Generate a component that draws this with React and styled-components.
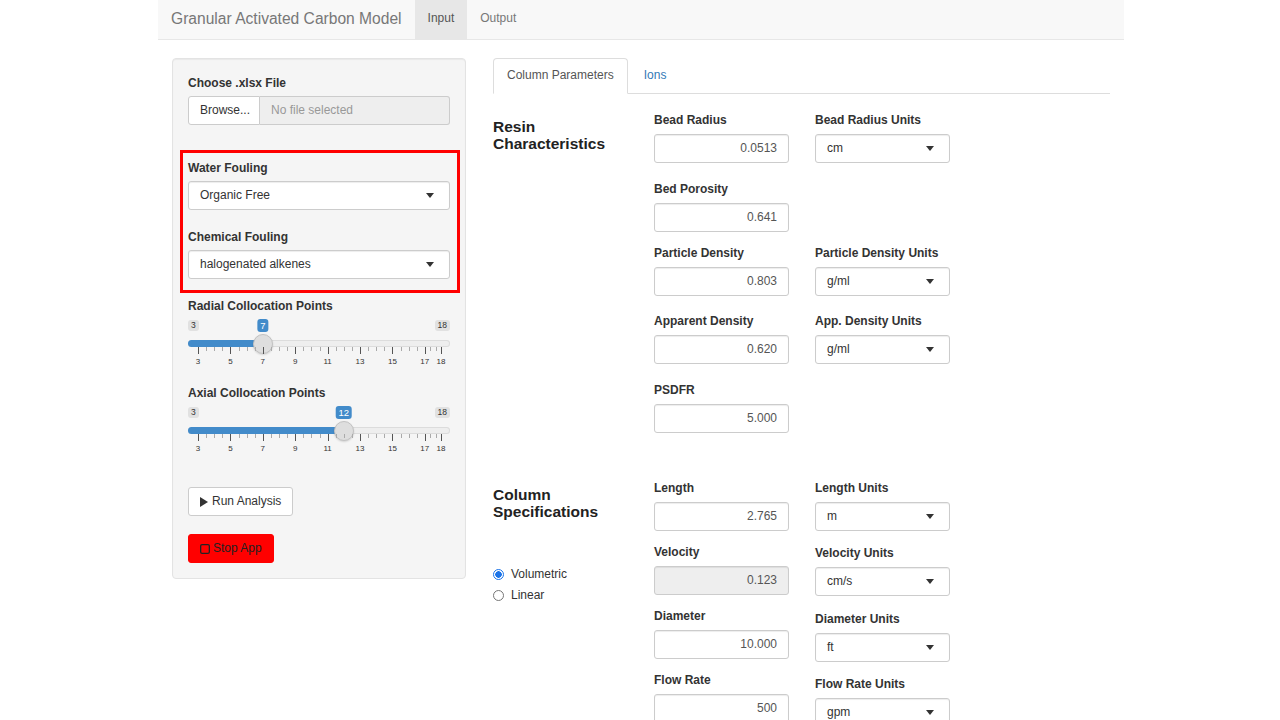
import React from 'react';
import styled, { createGlobalStyle } from 'styled-components';

const GlobalStyle = createGlobalStyle`
  html, body {
    margin: 0;
    padding: 0;
    background: #fff;
  }
  body {
    font-family: 'Liberation Sans', Arial, Helvetica, sans-serif;
    font-size: 12px;
    line-height: 17px;
    color: #333;
  }
  * {
    box-sizing: border-box;
  }
`;

const Page = styled.div`
  width: 966px;
  margin-left: 158px;
`;

const Navbar = styled.nav`
  display: flex;
  height: 40px;
  background: #f8f8f8;
  border-bottom: 1px solid #e7e7e7;
`;

const Brand = styled.div`
  display: flex;
  align-items: center;
  padding: 0 13px 2px;
  font-size: 15.6px;
  color: #777;
`;

const NavItem = styled.div`
  display: flex;
  align-items: center;
  padding: 0 13px 2px;
  color: ${p => (p.$active ? '#555' : '#777')};
  background: ${p => (p.$active ? '#e7e7e7' : 'transparent')};
`;

const Layout = styled.div`
  display: flex;
  align-items: flex-start;
  gap: 27px;
  padding: 18px 14px 0;
`;

const Well = styled.div`
  width: 294px;
  padding: 16px 15px 15px;
  background: #f5f5f5;
  border: 1px solid #e3e3e3;
  border-radius: 4px;
  box-shadow: inset 0 1px 1px rgba(0, 0, 0, 0.05);
`;

const Label = styled.div`
  font-weight: bold;
  line-height: 17px;
  margin-top: ${p => p.$mt ?? 0}px;
  margin-bottom: ${p => p.$mb ?? 5}px;
  color: #333;
`;

const Group = styled.div`
  margin-bottom: ${p => p.$mb}px;
`;

const FileRow = styled.div`
  display: flex;
  height: 29px;
`;

const BrowseButton = styled.div`
  width: 72px;
  padding-left: 11px;
  line-height: 27px;
  background: #fff;
  border: 1px solid #ccc;
  border-radius: 3px 0 0 3px;
  color: #333;
`;

const FileName = styled.div`
  flex: 1;
  padding-left: 11px;
  line-height: 27px;
  background: #eee;
  border: 1px solid #ccc;
  border-left: none;
  border-radius: 0 3px 3px 0;
  color: #999;
`;

const Annotation = styled.div`
  margin: 25px -10px 0 -8px;
  padding: 7px 7px 11px 5px;
  border: 3px solid #f00;
`;

const SelectBox = styled.div`
  display: flex;
  align-items: center;
  justify-content: space-between;
  height: 29px;
  padding: 0 15px 0 11px;
  background: #fff;
  border: 1px solid #ccc;
  border-radius: 3px;
  box-shadow: inset 0 1px 1px rgba(0, 0, 0, 0.075);
  color: #333;
`;

const Caret = styled.span`
  width: 0;
  height: 0;
  border-left: 4px solid transparent;
  border-right: 4px solid transparent;
  border-top: 5px solid #333;
`;

const NumberBox = styled.div`
  height: 29px;
  padding: 0 11px;
  line-height: 27px;
  text-align: right;
  color: #555;
  background: ${p => (p.$disabled ? '#eee' : '#fff')};
  border: 1px solid #ccc;
  border-radius: 3px;
  box-shadow: inset 0 1px 1px rgba(0, 0, 0, 0.075);
`;

const SliderWrap = styled.div`
  position: relative;
  padding-top: 5px;
  margin-bottom: 12px;
`;

const SliderEnds = styled.div`
  display: flex;
  justify-content: space-between;
  height: 11px;
`;

const EndTag = styled.span`
  padding: 0 3px;
  font-size: 8.5px;
  line-height: 11px;
  background: #e1e1e1;
  border-radius: 3px;
  color: #333;
`;

const ValueTag = styled.span`
  position: absolute;
  top: 4px;
  transform: translateX(-50%);
  padding: 0 3px;
  height: 13px;
  font-size: 9.5px;
  line-height: 13px;
  background: #428bca;
  color: #fff;
  border-radius: 3px;
`;

const Track = styled.div`
  position: relative;
  margin-top: 9px;
  height: 7px;
  background: #eee;
  border-radius: 4px;
  box-shadow: inset 0 0 0 1px #dcdcdc;
`;

const TrackFill = styled.div`
  height: 100%;
  background: #428bca;
  border-radius: 4px 0 0 4px;
`;

const Handle = styled.div`
  position: absolute;
  top: 50%;
  width: 20px;
  height: 20px;
  margin: -10px 0 0 -10px;
  background: #dedede;
  border: 1px solid #c2c2c2;
  border-radius: 50%;
  box-shadow: 0 1px 2px rgba(0, 0, 0, 0.15);
`;

const Grid = styled.div`
  position: relative;
  height: 26px;
`;

const Tick = styled.span`
  position: absolute;
  top: 0;
  width: 1px;
  height: ${p => (p.$major ? 7 : 4)}px;
  background: ${p => (p.$major ? '#555' : '#aaa')};
`;

const TickText = styled.span`
  position: absolute;
  top: 10px;
  transform: translateX(-50%);
  font-size: 8px;
  line-height: 10px;
  color: #333;
`;

const ButtonBlock = styled.div`
  display: flex;
  flex-direction: column;
  align-items: flex-start;
  gap: 18px;
  margin-top: 27px;
`;

const Button = styled.div`
  display: flex;
  align-items: center;
  gap: ${p => (p.$danger ? 3 : 4)}px;
  height: 29px;
  padding: 0 11px;
  background: ${p => (p.$danger ? '#f00' : '#fff')};
  border: 1px solid ${p => (p.$danger ? '#f00' : '#ccc')};
  border-radius: 3px;
  color: ${p => (p.$danger ? '#222' : '#333')};
`;

const Main = styled.div`
  width: 617px;
`;

const TabBar = styled.div`
  display: flex;
  border-bottom: 1px solid #ddd;
`;

const Tab = styled.div`
  margin: 0 2px -1px 0;
  padding: 8px 13px 9px;
  line-height: 17px;
  border: 1px solid ${p => (p.$active ? '#ddd' : 'transparent')};
  border-bottom-color: ${p => (p.$active ? '#fff' : 'transparent')};
  border-radius: 4px 4px 0 0;
  background: ${p => (p.$active ? '#fff' : 'transparent')};
  color: ${p => (p.$active ? '#555' : '#337ab7')};
`;

const Section = styled.div`
  display: grid;
  grid-template-columns: 135px 296px;
  column-gap: 26px;
  align-items: start;
  margin-top: ${p => p.$top}px;
`;

const Heading = styled.h4`
  margin: 6px 0 0;
  font-size: 15.5px;
  line-height: 17px;
  font-weight: bold;
  color: #222;
`;

const FieldRow = styled.div`
  display: grid;
  grid-template-columns: 135px 135px;
  column-gap: 26px;
  align-items: start;
`;

const Stack = styled.div`
  display: flex;
  flex-direction: column;
`;

const RadioList = styled.div`
  display: flex;
  flex-direction: column;
  gap: 4px;
  margin-top: 46px;
`;

const RadioItem = styled.div`
  display: flex;
  align-items: center;
  gap: 7px;
  line-height: 17px;
  color: #333;
`;

const RadioDot = styled.span`
  width: 11px;
  height: 11px;
  border-radius: 50%;
  border: 1px solid ${p => (p.$on ? '#1a73e8' : '#767676')};
  background: ${p => (p.$on ? 'radial-gradient(circle, #1a73e8 0 3px, #fff 3.5px)' : '#fff')};
`;

const Field = ({ label, value, disabled, mb = 13 }) => (
  <Group $mb={mb}>
    <Label>{label}</Label>
    <NumberBox $disabled={disabled}>{value}</NumberBox>
  </Group>
);

const Dropdown = ({ label, value, mb = 17.5, labelGap = 5 }) => (
  <Group $mb={mb}>
    <Label $mb={labelGap}>{label}</Label>
    <SelectBox>
      <span>{value}</span>
      <Caret />
    </SelectBox>
  </Group>
);

const Slider = ({ min, max, value }) => {
  const pos = v => 10 + ((v - min) / (max - min)) * 243;
  const x = pos(value);
  const major = [3, 5, 7, 9, 11, 13, 15, 17, 18];
  const minor = [];
  for (let v = 3; v < 17; v += 2) minor.push(v + 0.5, v + 1, v + 1.5);
  minor.push(17.33, 17.67);
  return (
    <SliderWrap>
      <SliderEnds>
        <EndTag>{min}</EndTag>
        <EndTag>{max}</EndTag>
      </SliderEnds>
      <ValueTag style={{ left: x }}>{value}</ValueTag>
      <Track>
        <TrackFill style={{ width: x }} />
        <Handle style={{ left: x }} />
      </Track>
      <Grid>
        {minor.map(v => (
          <Tick key={'m' + v} style={{ left: pos(v) }} />
        ))}
        {major.map(v => (
          <React.Fragment key={v}>
            <Tick $major style={{ left: pos(v) }} />
            <TickText style={{ left: pos(v) }}>{v}</TickText>
          </React.Fragment>
        ))}
      </Grid>
    </SliderWrap>
  );
};

const PlayIcon = () => (
  <svg width="8" height="10" viewBox="0 0 8 10">
    <path d="M0 0 L8 5 L0 10 Z" fill="#333" />
  </svg>
);

const StopIcon = () => (
  <svg width="10" height="10" viewBox="0 0 10 10">
    <rect x="0.65" y="0.65" width="8.7" height="8.7" rx="1.4" fill="none" stroke="#222" strokeWidth="1.3" />
  </svg>
);

export default function App() {
  return (
    <Page>
      <GlobalStyle />
      <Navbar>
        <Brand>Granular Activated Carbon Model</Brand>
        <NavItem $active>Input</NavItem>
        <NavItem>Output</NavItem>
      </Navbar>
      <Layout>
        <Well>
          <Label $mb={4}>Choose .xlsx File</Label>
          <FileRow>
            <BrowseButton>Browse...</BrowseButton>
            <FileName>No file selected</FileName>
          </FileRow>
          <Annotation>
            <Dropdown label="Water Fouling" value="Organic Free" mb={19} labelGap={4} />
            <Dropdown label="Chemical Fouling" value="halogenated alkenes" mb={0} labelGap={4} />
          </Annotation>
          <Label $mb={0} $mt={5}>Radial Collocation Points</Label>
          <Slider min={3} max={18} value={7} />
          <Label $mb={0}>Axial Collocation Points</Label>
          <Slider min={3} max={18} value={12} />
          <ButtonBlock>
            <Button>
              <PlayIcon />
              Run Analysis
            </Button>
            <Button $danger>
              <StopIcon />
              Stop App
            </Button>
          </ButtonBlock>
        </Well>
        <Main>
          <TabBar>
            <Tab $active>Column Parameters</Tab>
            <Tab>Ions</Tab>
          </TabBar>
          <Section $top={18}>
            <Heading>Resin Characteristics</Heading>
            <div>
              <FieldRow>
                <Field label="Bead Radius" value="0.0513" />
                <Dropdown label="Bead Radius Units" value="cm" />
              </FieldRow>
              <FieldRow>
                <Field label="Bed Porosity" value="0.641" />
              </FieldRow>
              <FieldRow>
                <Field label="Particle Density" value="0.803" />
                <Dropdown label="Particle Density Units" value="g/ml" />
              </FieldRow>
              <FieldRow>
                <Field label="Apparent Density" value="0.620" />
                <Dropdown label="App. Density Units" value="g/ml" />
              </FieldRow>
              <FieldRow>
                <Field label="PSDFR" value="5.000" />
              </FieldRow>
            </div>
          </Section>
          <Section $top={34}>
            <div>
              <Heading>Column Specifications</Heading>
              <RadioList>
                <RadioItem>
                  <RadioDot $on />
                  Volumetric
                </RadioItem>
                <RadioItem>
                  <RadioDot />
                  Linear
                </RadioItem>
              </RadioList>
            </div>
            <FieldRow>
              <Stack>
                <Field label="Length" value="2.765" />
                <Field label="Velocity" value="0.123" disabled />
                <Field label="Diameter" value="10.000" />
                <Field label="Flow Rate" value="500" />
              </Stack>
              <Stack>
                <Dropdown label="Length Units" value="m" mb={14.5} />
                <Dropdown label="Velocity Units" value="cm/s" mb={14.5} />
                <Dropdown label="Diameter Units" value="ft" mb={14.5} />
                <Dropdown label="Flow Rate Units" value="gpm" mb={14.5} />
              </Stack>
            </FieldRow>
          </Section>
        </Main>
      </Layout>
    </Page>
  );
}
